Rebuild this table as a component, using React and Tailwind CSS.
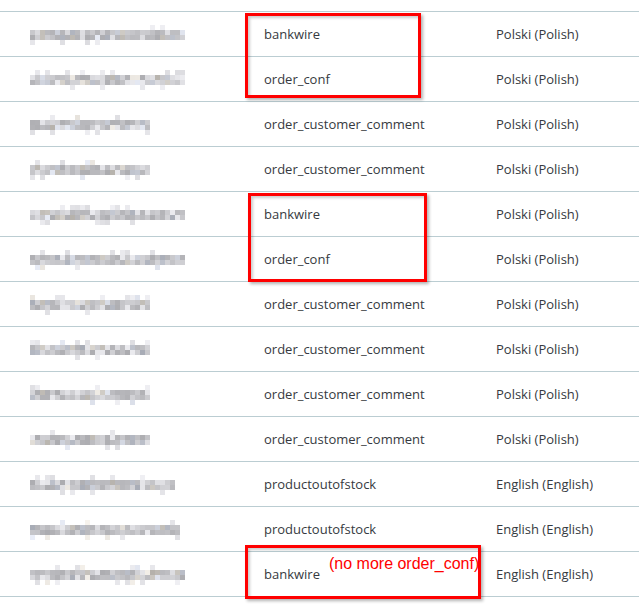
import React from "react";

const rows = [
  { w: 153, t: "bankwire", l: "Polski (Polish)" },
  { w: 153, t: "order_conf", l: "Polski (Polish)" },
  { w: 118, t: "order_customer_comment", l: "Polski (Polish)" },
  { w: 120, t: "order_customer_comment", l: "Polski (Polish)" },
  { w: 153, t: "bankwire", l: "Polski (Polish)" },
  { w: 153, t: "order_conf", l: "Polski (Polish)" },
  { w: 118, t: "order_customer_comment", l: "Polski (Polish)" },
  { w: 120, t: "order_customer_comment", l: "Polski (Polish)" },
  { w: 118, t: "order_customer_comment", l: "Polski (Polish)" },
  { w: 120, t: "order_customer_comment", l: "Polski (Polish)" },
  { w: 145, t: "productoutofstock", l: "English (English)" },
  { w: 150, t: "productoutofstock", l: "English (English)" },
  { w: 155, t: "bankwire", l: "English (English)" },
];

function rng(seed) {
  let s = seed * 9301 + 49297;
  return () => {
    s = (s * 16807) % 2147483647;
    return s / 2147483647;
  };
}

function gray(r, lo, hi) {
  const v = Math.round(lo + r() * (hi - lo));
  const tint = r();
  let rr = v, gg = v, bb = v + 4;
  if (tint < 0.1) { rr = v + 8; gg = v + 4; bb = v - 2; }
  else if (tint < 0.2) { rr = v - 4; gg = v; bb = v + 10; }
  return `rgb(${rr},${gg},${bb})`;
}

function Mosaic({ w, seed }) {
  const r = rng(seed);
  const n = Math.round(w / 5);
  const grid = [0, 1, 2, 3].map((row) =>
    Array.from({ length: n }, () => {
      if (row === 0) return r() < 0.2 ? gray(r, 220, 240) : "transparent";
      if (row === 3) return r() < 0.15 ? gray(r, 220, 240) : "transparent";
      return r() < 0.15 ? gray(r, 215, 235) : gray(r, 172, 212);
    })
  );
  return (
    <div className="flex flex-col">
      {grid.map((row, i) => (
        <div key={i} className="flex">
          {row.map((c, j) => (
            <div key={j} className="w-[5px] h-[5px]" style={{ background: c }} />
          ))}
        </div>
      ))}
    </div>
  );
}

export default function App() {
  return (
    <div className="relative w-[639px] h-[605px] overflow-hidden bg-white font-['Open_Sans',sans-serif] text-[13px] text-[#363a41]">
      <div className="h-[12px] border-b border-[#bbcdd2]" />
      {rows.map((r, i) => (
        <div
          key={i}
          className="grid grid-cols-[264px_232px_1fr] items-center h-[45px] border-b border-[#bbcdd2]"
        >
          <div className="pl-[30px] pt-[2px]">
            <Mosaic w={r.w} seed={i + 3} />
          </div>
          <div className="pt-[2px]">{r.t}</div>
          <div className="pt-[2px]">{r.l}</div>
        </div>
      ))}

      <div className="absolute left-[245px] top-[13px] w-[176px] h-[85px] border-[3px] border-[#ff0000] shadow-[2px_2px_3px_rgba(0,0,0,0.3),inset_2px_2px_3px_rgba(0,0,0,0.2)]" />
      <div className="absolute left-[248px] top-[193px] w-[179px] h-[89px] border-[3px] border-[#ff0000] shadow-[2px_2px_3px_rgba(0,0,0,0.3),inset_2px_2px_3px_rgba(0,0,0,0.2)]" />
      <div className="absolute left-[245px] top-[545px] w-[236px] h-[54px] border-[3px] border-[#ff0000] shadow-[2px_2px_3px_rgba(0,0,0,0.3),inset_2px_2px_3px_rgba(0,0,0,0.2)]">
        <div className="absolute left-[81px] top-[7px] whitespace-nowrap font-['Liberation_Sans',Arial,sans-serif] text-[16px] leading-[18px] text-[#ff0000]">
          (no more order_conf)
        </div>
      </div>
    </div>
  );
}
